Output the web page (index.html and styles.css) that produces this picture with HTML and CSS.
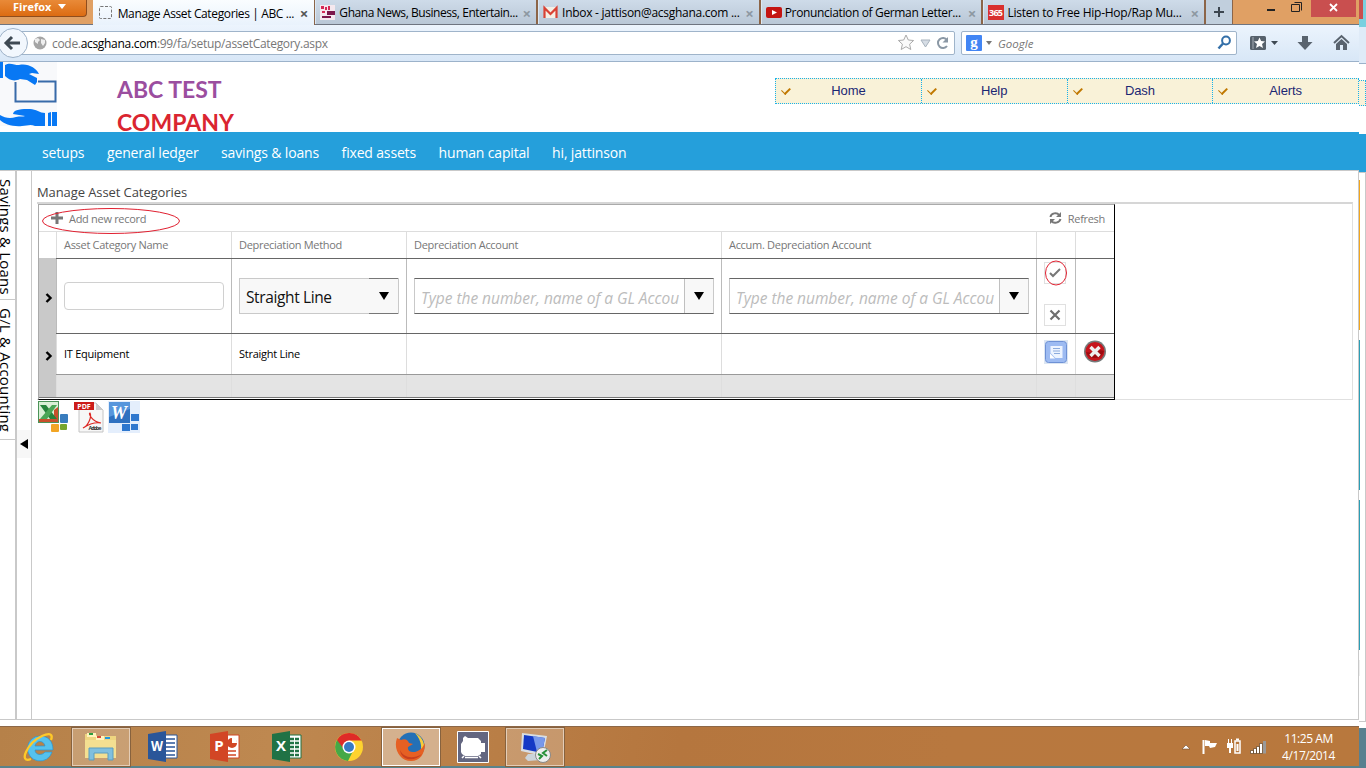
FILE: index.html
```html
<!DOCTYPE html>
<html lang="en">
<head>
<meta charset="utf-8">
<title>Manage Asset Categories | ABC Test Company</title>
<link rel="stylesheet" href="styles.css">
</head>
<body>
<div class="screen">
<div class="main">
  <header class="tabs">
    <div class="firefox"><b>Firefox</b><i class="caret white"></i></div>
    <div class="tab active"><svg width="16" height="16"><rect x="1.5" y="1.5" width="12" height="12" rx="1" fill="none" stroke="#777" stroke-dasharray="3 1.5"/></svg><span class="t1">Manage Asset Categories | ABC ...</span><em>×</em></div>
    <div class="tab"><svg width="16" height="16"><path fill="#f5e8ee" d="M0 0h15v15H0z"/><path fill="#d52a55" d="M1 1h3v3H1zM5 2h2v3H5zM8 1h2v4H8zM2 6h3v2H2z"/><path fill="#7c174b" d="M7 6h8v4H7zM2 11h9v2H2z"/></svg><span class="t2">Ghana News, Business, Entertain...</span><em>×</em></div>
    <div class="tab"><svg width="16" height="16"><path fill="#f4efe5" d="M1 2h13v11H1z"/><path d="M1.500 13V3l6 6 6-6v10" fill="none" stroke="#d94235" stroke-width="2.200"/></svg><span class="t3">Inbox - jattison@acsghana.com ...</span><em>×</em></div>
    <div class="tab"><svg width="16" height="16"><rect y="2" width="16" height="11" rx="2" fill="#c41411"/><path d="M6 5l5 2.500L6 10z" fill="#fff"/></svg><span class="t4">Pronunciation of German Letter...</span><em>×</em></div>
    <div class="tab"><svg width="16" height="16"><path fill="#d9302f" d="M0 0h16v15H0z"/><text x="8" y="11" text-anchor="middle" textLength="14" font-size="9" font-weight="700" fill="#fff">365</text></svg><span class="t5">Listen to Free Hip-Hop/Rap Mu...</span><em>×</em></div>
    <div class="newtab"><svg width="12" height="12"><path d="M6 1v10M1 6h10" stroke="#3c4650" stroke-width="2"/></svg></div>
    <div class="controls"><svg width="126" height="25"><path d="M34 10h8" stroke="#222" stroke-width="2"/><path d="M61.500 2.500h7v8M58.500 4.500h8v7h-8z" fill="none" stroke="#222"/><path fill="#c94f4f" d="M78 0h45v17H78z"/><path d="M97 4l7 7m0-7l-7 7" stroke="#fff" stroke-width="1.800"/></svg></div>
  </header>
  <div class="toolbar">
    <svg class="back" width="32" height="34"><circle cx="13" cy="17" r="14.500" fill="#f2f7fd" stroke="#9eb2c8"/><path d="M12 11l-6 6 6 6M6 17h14" fill="none" stroke="#3e4953" stroke-width="3"/></svg>
    <div class="url"><svg width="14" height="14"><circle cx="7" cy="7" r="6.500" fill="#a5a5a5"/><path d="M2 3l3-1 2 2-2 2v2L2 6zM8 3l4 1v3l-2 3-2-3z" fill="#eee"/></svg><span class="address">code.<b>acsghana.com</b>:99/fa/setup/assetCategory.aspx</span>
      <svg width="52" height="20"><path d="M9 2l2.300 5 5.300.5-4 3.700 1.200 5.300L9 13.700l-4.800 2.800 1.200-5.300-4-3.700L6.700 7z" fill="#fafafa" stroke="#aaa"/><path d="M24 7h9l-4.500 7z" fill="#d6dde5" stroke="#a7b2bd"/><path d="M50 7A5 5 0 1 0 50 13" fill="none" stroke="#8b98a5" stroke-width="2"/><path d="M51 4v5.500h-5.500z" fill="#8b98a5"/></svg></div>
    <div class="search"><svg width="16" height="16"><rect width="16" height="16" rx="1" fill="#4285f4"/><text x="8" y="11.500" text-anchor="middle" font-family="Liberation Serif, serif" font-size="15" font-style="normal" font-weight="700" fill="#fff">g</text></svg><i class="caret small"></i><span>Google</span><svg width="15" height="16"><circle cx="9" cy="5.500" r="3.900" fill="none" stroke="#336fa8" stroke-width="2"/><path d="M6 8.500l-4.500 5" stroke="#336fa8" stroke-width="2.500"/></svg></div>
    <svg class="tools" width="110" height="30"><rect x="1" y="8" width="16" height="14" rx="1.500" fill="#56616c"/><path d="M4 9v12" stroke="#a4adb5"/><path d="M10.500 9.500l1.600 3.600 3.900.4-3 2.600 1 3.900-3.500-2-3.500 2 1-3.900-3-2.600 3.900-.4z" fill="#fff"/><path d="M22 13h7l-3.500 4z" fill="#3e4953"/><path d="M53 8h6v6h4.500L56 22l-7.500-8H53z" fill="#59636e"/><path d="M85 15l7.500-7 7.500 7" fill="none" stroke="#59636e" stroke-width="2"/><path d="M87 16l5.500-5 5.500 5v6h-4v-5h-3v5h-4z" fill="#59636e"/></svg>
  </div>
  <section class="banner">
    <svg class="logo" width="58" height="66"><path fill="#f8f9fb" d="M0 0h57v64H0z"/><path d="M0 0h3v16H0z" fill="#0878f4"/><path d="M5 3c5-3 9 0 14 0 9-2 17 3 20 9l-7-1-3 1 8 4 0 4-2 3-8-5-7-1c-6 3-11 1-15-3z" fill="#0878f4"/><path d="M15.500 20v19.500h40v-20H38" fill="none" stroke="#386ba9" stroke-width="2"/><path d="M0 53c5 3 10 4 16 2 4-1 7 0 9-1l-12-2c1-5 9-5 17-5 6 0 10 4 15 4v13H35c-5-2-8 0-13 0-9 1-18-2-22-6zM48 51l3-1v14h-3zM52 50h5v14h-5z" fill="#0878f4"/></svg>
    <h1><span class="abc">ABC TEST</span><span class="co">COMPANY</span></h1>
    <nav class="quick"><a>Home</a><a>Help</a><a>Dash</a><a>Alerts</a></nav>
  </section>
  <nav class="menu"><a>setups</a><a>general ledger</a><a>savings &amp; loans</a><a>fixed assets</a><a>human capital</a><a>hi, jattinson</a></nav>
  <div class="work">
    <aside><div class="v1"><span>Savings &amp; Loans</span></div><div class="v2"><span>G/L &amp; Accounting</span></div></aside>
    <div class="splitter"><div><svg width="9" height="10"><path d="M8 0v10L0 5z"/></svg></div></div>
    <main>
      <h2><span>Manage Asset Categories</span></h2>
      <div class="frame">
        <div class="grid">
          <div class="commands"><svg width="12" height="12"><path d="M6 0v12M0 6h12" stroke="#777" stroke-width="3"/></svg><span class="add">Add new record</span><svg width="13" height="12"><path d="M1.500 5C2 1 8 0 10 3M11.500 7c-1 4-7 5-9 2" fill="none" stroke="#777" stroke-width="2"/><path d="M12 0v5H7zM1 12V7h5z" fill="#777"/></svg><span class="refresh">Refresh</span>
            <svg class="mark" width="140" height="28"><ellipse cx="70" cy="14" rx="68.500" ry="12.500"/></svg></div>
          <div class="row head"><div></div><div><span>Asset Category Name</span></div><div><span>Depreciation Method</span></div><div><span>Depreciation Account</span></div><div><span>Accum. Depreciation Account</span></div><div></div><div></div></div>
          <div class="row edit"><div class="expand"><svg width="8" height="10"><path d="M1.500 1l4 4-4 4" fill="none" stroke="#000" stroke-width="2.400"/></svg></div>
            <div><div class="input"></div></div>
            <div><div class="select"><span>Straight Line</span><div><i class="caret big"></i></div></div></div>
            <div><div class="combo"><span>Type the number, name of a GL Accou</span><div><i class="caret big"></i></div></div></div>
            <div><div class="combo"><span>Type the number, name of a GL Accou</span><div><i class="caret big"></i></div></div></div>
            <div class="actions"><div><svg width="14" height="12"><path d="M2 6l3 3 7-7" fill="none" stroke="#777" stroke-width="2"/></svg><svg class="mark round" width="24" height="28"><ellipse cx="12" cy="14" rx="10.500" ry="12"/></svg></div><div><svg width="12" height="12"><path d="M1.500 1.500l9 9m0-9l-9 9" stroke="#6e6e6e" stroke-width="2.200"/></svg></div></div><div></div></div>
          <div class="row data"><div class="expand"><svg width="8" height="10"><path d="M1.500 1l4 4-4 4" fill="none" stroke="#000" stroke-width="2.400"/></svg></div><div><span>IT Equipment</span></div><div><span>Straight Line</span></div><div></div><div></div>
            <div class="icon"><svg width="24" height="24"><path fill="#dce6f3" d="M0 0h24v24H0z"/><rect x="1.500" y="1.500" width="21" height="21" rx="3" fill="#9dbbf2" stroke="#6e91d5"/><path d="M6.500 6h12v12h-7l-5-5z" fill="#edf4ff"/><path d="M9 8.500h7M9 11h7M10 13.500h6" stroke="#8cabdd"/><path d="M6 13.500l5 5H6z" fill="#fff"/></svg></div>
            <div class="icon"><svg width="24" height="24"><circle cx="12" cy="11.500" r="11" fill="#757a7a"/><circle cx="12" cy="11.500" r="9.500" fill="#c7141c"/><path d="M3 12a9.500 9.500 0 0 0 18-1c-6-3-10 3-18 1z" fill="#9c0b10"/><path d="M7.500 7l9 9m0-9l-9 9" stroke="#eee" stroke-width="3.400"/></svg></div></div>
          <div class="row foot"><div class="expand"></div><div></div><div></div><div></div><div></div><div></div><div></div></div>
        </div>
      </div>
      <div class="exports">
        <svg width="32" height="32"><rect x=".5" y=".5" width="20" height="21" fill="#d9efd5" stroke="#4b9358"/><path d="M1 18h19v3H1zM16 9l4-3v14h-4z" fill="#c8502c"/><path d="M2 4h6l11 14h-7z" fill="#26833b"/><path d="M14 4h5L9 18H2z" fill="#4aa555"/><rect x="22" y="13" width="8" height="9" rx="1" fill="#397cbd"/><rect x="13" y="23" width="8" height="8" rx="1" fill="#f2a524"/><rect x="22" y="23" width="7" height="6" rx="1" fill="#77a52d"/></svg>
        <svg class="pdf" width="30" height="32"><path d="M5 2h17l7 7v22H5z" fill="#f7f7f7" stroke="#c4c4c4"/><path d="M22 2v7h7z" fill="#ccc"/><path d="M0 1h20v8H0z" fill="#cc1d1a"/><text x="10" y="8" text-anchor="middle" font-size="7" font-weight="700" fill="#fff">PDF</text><path d="M9 27c5-2 9-11 7-15-2 0 2 9 11 10-6-1-12 1-18 5z" fill="none" stroke="#dc2824" stroke-width="1.200"/><text x="21" y="29" text-anchor="middle" textLength="13" font-size="5.500" font-weight="700" fill="#333">Adobe</text></svg>
        <svg width="32" height="32"><path fill="#e4eefc" d="M0 0h32v32H0z"/><path d="M1 1h21v21H1z" fill="#2f71c0"/><path d="M1 1h21v7L1 16z" fill="#5796dc"/><text x="11" y="18" text-anchor="middle" font-family="Liberation Serif, serif" font-size="18" font-style="italic" font-weight="700" fill="#fff">W</text><path d="M23 13h8v7h-8zM14 23h8v7h-8zM23 23h7v6h-7z" fill="#2e77ce"/></svg>
      </div>
    </main>
  </div>
  <footer class="taskbar">
    <div class="app"><svg width="34" height="32"><path fill-rule="evenodd" d="M18 5a12.500 12.500 0 1 0 12 16h-7c-3 4-10 3-10-2h18C31 10 26 5 18 5zM13 15c1-6 9-6 10 0z" fill="#55c2ee" stroke="#2c93cf" stroke-width=".7"/><path d="M9 28c-13 5-4-16 11-23 9-4 11-1 9 4" fill="none" stroke="#ffc928" stroke-width="2.300"/></svg></div>
    <div class="app open"><svg width="34" height="32"><path d="M1 3h11l1 2h19v22H1z" fill="#efd580"/><path d="M3 2h9v4H3zM12 5h8v4h-8z" fill="#fff3bd"/><path d="M5 2h4v2H5z" fill="#2a9d3e"/><path d="M13 5h4v2h-4z" fill="#d44c38"/><path d="M21 6h5v2h-5z" fill="#2196dc"/><path d="M1 9h31v18H1z" fill="#f4df91"/><path d="M5 17h24v12h-5v-7H10v7H5z" fill="#80bfde" stroke="#5c9dbe"/></svg></div>
    <div class="app"><svg width="32" height="32"><path fill="#fff" stroke="#2a5699" d="M17 4h13v23H17z"/><path d="M18 8h10M18 12h10M18 16h10M18 20h10M18 24h10" stroke="#2a5699" stroke-width="1.500"/><path fill="#2a5699" d="M1 3l18-3v31L1 28z"/><text x="10" y="20" text-anchor="middle" textLength="12" lengthAdjust="spacingAndGlyphs" font-size="14" font-weight="700" fill="#fff">W</text></svg></div>
    <div class="app"><svg width="32" height="32"><path fill="#fff" stroke="#d24625" d="M17 4h13v23H17z"/><circle cx="23" cy="12" r="5" fill="#d24625"/><path d="M23 12V6a6 6 0 0 1 5 6z" fill="#fff"/><path d="M19 20h8M19 24h8" stroke="#d24625" stroke-width="1.500"/><path fill="#d24625" d="M1 3l18-3v31L1 28z"/><text x="10" y="20" text-anchor="middle" font-size="15" font-weight="700" fill="#fff">P</text></svg></div>
    <div class="app"><svg width="32" height="32"><path fill="#fff" stroke="#207245" d="M17 4h13v23H17z"/><path d="M19 8h9M19 12h9M19 16h9M19 20h9M19 24h9" stroke="#207245" stroke-width="2.500" stroke-dasharray="4 1"/><path fill="#207245" d="M1 3l18-3v31L1 28z"/><text x="10" y="20" text-anchor="middle" font-size="15" font-weight="700" fill="#fff">X</text></svg></div>
    <div class="app"><svg width="32" height="32"><circle cx="16" cy="16" r="14" fill="#fed32f"/><path d="M16 16L4 9a14 14 0 0 0 11 21l6-12z" fill="#45a847"/><path d="M16 9.500h12.500A14 14 0 0 0 4 9l6 8z" fill="#df2b27"/><circle cx="16" cy="16" r="6.500" fill="#fff"/><circle cx="16" cy="16" r="5" fill="#387ac4"/></svg></div>
    <div class="app open current"><svg width="32" height="32"><circle cx="16" cy="15" r="13.500" fill="#2470b6"/><path d="M20 2c12 6 12 21 1 26 8-8 6-18-1-26z" fill="#f8cc39"/><path d="M2 7l4 2c4-2 7 0 8 3l4 1-5 3c-1 5 6 8 14 1l3-5c0 11-5 18-14 18C5 30-2 18 2 7z" fill="#e66023"/><path d="M5 19c3 7 12 10 22 4-8 9-21 6-22-4z" fill="#c9401e"/></svg></div>
    <div class="app"><svg width="32" height="32"><path d="M.5.500h31v31H.5z" fill="#636680" stroke="#fff"/><path d="M6 7l2-2 3 2h10l3 3v2h4v9h-4v2l-3 2H8l-3-2-1-2v-8l2-3z" fill="#fff"/><path d="M7 25l-2 2M22 25l2 2M8 26.500h13" stroke="#fff" stroke-width="1.500"/></svg></div>
    <div class="app open"><svg width="32" height="32"><path d="M3 2l25 3-4 20L2 20z" fill="#d9dee3"/><path d="M5 4l21 3-3 15-19-4z" fill="#1438c5"/><path d="M14 5l12 2-3 15-5-1z" fill="#7898ea"/><path d="M9 23h9v3l4 3-13 1-3-3z" fill="#ccd4da"/><circle cx="24" cy="24" r="7.500" fill="#eee" stroke="#888"/><path d="M19 23l4 2-3 3M28 19l-4 3 4 3" fill="none" stroke="#289139" stroke-width="2"/></svg></div>
    <svg class="tray" width="90" height="24"><path d="M2 14h8l-4-4z" fill="#fff" stroke="#6e4b2e" stroke-width=".6"/><path d="M23.500 5v14" stroke="#fff" stroke-width="2"/><path d="M25 5l5 1v2l7 0-2 4-5 1-1-2h-4z" fill="#fff"/><path d="M55 6h5v12h-5z" fill="none" stroke="#fff" stroke-width="1.500"/><path d="M56.500 9h2v7h-2zM56 3.500h3v2h-3zM47 8h6v5h-6zM49 12h2v6h-2zM48 4h1v4h-1zM51 4h1v4h-1z" fill="#fff"/><path d="M70.500 15.500h3v3h-3zM73.500 13.500h3v5h-3zM76.500 11.500h3v7h-3zM79.500 8.500h3v10h-3z" fill="#fff" stroke="#604020" stroke-width=".7"/><path d="M83 6h3v12.500h-3z" fill="#999"/></svg>
    <div class="clock"><span>11:25 AM</span><span>4/17/2014</span></div>
  </footer>
</div>
<div class="edge"><div class="e-title"></div><div class="e-tool"></div><div class="e-banner"><div></div></div><div class="e-menu"></div><div class="e-work"><i></i><b></b><b></b><s></s></div><div class="e-gap"></div><div class="e-desk"></div></div>
</div>
</body>
</html>
```
FILE: styles.css
```css
*{box-sizing:border-box}
body{margin:0;font-family:"Open Sans","Noto Sans",sans-serif;font-size:11px;color:#000;background:#fff}
svg{display:block;flex:none}
span{white-space:nowrap}
.screen{display:flex;width:1366px;height:768px;overflow:hidden;background:#fff}
.main{width:1359px;height:768px;display:flex;flex-direction:column;flex:none}
.tabs{height:25px;display:flex;background:#e0a064;border-bottom:1px solid #6e7480;flex:none}
.firefox{width:87px;height:17px;margin-right:6px;background:linear-gradient(#e98a38,#dc6c12);border:1px solid #8f4d1d;border-top:0;border-left:0;border-radius:0 0 4px 0;color:#fff;display:flex;align-items:flex-start;padding-left:13px;gap:7px;font-size:11px;line-height:13px}
.firefox .caret{margin-top:4px}
.caret{display:block;width:0;height:0;border:4px solid transparent;border-bottom:0;border-top:5px solid #000;flex:none}
.caret.white{border-top-color:#fff}
.caret.small{border-width:4px 3px 0;border-top-color:#777}
.caret.big{border-width:8px 5px 0}
.tab{width:222.700px;height:24px;padding:1px 5px 0 4px;display:flex;align-items:center;background:linear-gradient(#cedbe9,#b9c7d6);border-right:2px solid #8c6548;border-left:1px solid #dce8f4;flex:none;font-size:12px;gap:3px}
.tab.active{height:25px;background:linear-gradient(#fafdff,#e9f2fc);border-left:0;border-right-width:1px;padding-right:6px;padding-left:5px;gap:4px}
.tab em{font-style:normal;margin-left:auto;color:#8d98a2;font-size:15px;font-weight:700;line-height:20px}
.tab.active em{color:#555}
.t1{letter-spacing:-.37px}
.t2{letter-spacing:-.44px}
.t3{letter-spacing:-.27px}
.t4{letter-spacing:-.35px}
.t5{letter-spacing:-.24px}
.newtab{width:27px;background:#c1cfdd;border-right:1px solid #8c6548;display:grid;place-items:center}
.toolbar{height:37px;background:linear-gradient(#ecf4fd,#d8e7f7);border-bottom:1px solid #9cb2ca;display:flex;align-items:center;flex:none}
.back{margin-right:-12px;position:relative}
.url{width:935px;height:24px;background:#fff;border:1px solid #9fb4ca;border-radius:2px;display:flex;align-items:center;padding-left:12px;padding-right:5px}
.address{font-size:12px;color:#777;margin-left:5px;margin-right:auto;letter-spacing:-.31px}
.address b{font-weight:400;color:#000}
.search{width:276px;height:24px;margin-left:6px;background:#fff;border:1px solid #9fb4ca;border-radius:2px;display:flex;align-items:center;padding:0 4px;font-size:11.500px;font-style:italic;color:#777}
.search .caret{margin:0 6px 0 4px}
.search span{margin-right:auto}
.tools{margin-left:12px}
.banner{height:70px;display:flex;flex:none}
.banner h1{margin:11px 0 0 59px;width:599px;font:700 23px/33px Lato,sans-serif;display:flex;flex-direction:column;align-items:flex-start}
.abc{color:#9b4e9f}
.co{color:#da2530}
.quick{display:flex;margin-top:16px;width:584px;height:26px;border:1px dotted #18b2ea;background:#f9f2d8;margin-left:59px}
.quick a{flex:1;text-align:center;font:13px/24px "Liberation Sans",sans-serif;letter-spacing:-.1px;color:#1b2773;border-left:1px dotted #18b2ea;position:relative}
.quick a:first-child{border-left:0}
.quick a:before{content:"";position:absolute;left:6px;top:8px;width:7px;height:4px;border-left:1.500px solid #c07800;border-bottom:2px solid #c07800;transform:rotate(-45deg)}
.menu{height:38px;background:#259fdb;color:#fff;display:flex;align-items:center;gap:22.600px;padding:2px 0 0 42px;font-size:14px;letter-spacing:-.16px;flex:none}
.work{height:550px;border-top:1px solid #c9c9c9;border-right:1px solid #c9c9c9;border-bottom:1px solid #c9c9c9;display:flex;flex:none}
aside{width:17px;border-right:2px solid #c9c9c9;font-size:15px;letter-spacing:.22px;flex:none}
aside>div{writing-mode:vertical-rl;border-bottom:1px solid #c9c9c9;line-height:16px;width:15px;display:flex;flex-direction:column-reverse;align-items:flex-start}
.v1{height:129px;padding-top:8px}
.v2{height:140px;padding-top:8px}
aside span{margin-left:-2px}
.splitter{width:15px;border-right:1px solid #c9c9c9;padding-top:259px;flex:none}
.splitter div{height:28px;background:#f7f7f7;display:grid;place-items:center}
main{padding:13px 6px 0 5px;flex:1}
h2{margin:0;font-size:13px;font-weight:400;line-height:17px;height:19px;color:#444;letter-spacing:-.09px}
.frame{border:1px solid #e0e0e0;border-top:2px solid #d6d6d6;border-left:0;height:198px;width:1316px;margin-top:-1px;padding-left:1px}
.grid{width:1077px;height:196px;border:1px solid #000;border-top-color:#aaa;border-left-color:#aaa;color:#777}
.commands{height:26px;display:flex;align-items:center;padding:0 9px 0 12px;position:relative;letter-spacing:-.3px}
.add{margin-left:6px;margin-right:auto}
.refresh{margin-left:6px}
.mark{position:absolute;left:2px;top:2px;fill:none;stroke:#e02030;stroke-width:1}
.mark.round{left:-1.500px;top:-4px}
.row{display:grid;grid-template-columns:17px 175px 175px 315px 315px 39px 39px;border-top:1px solid #ddd}
.row>div{border-left:1px solid #ddd;padding-left:7px;display:flex;align-items:center;min-width:0}
.row>div:first-child{border-left:0;padding-left:6px}
.head{height:27px;letter-spacing:-.3px}
.head span,.data span{padding-bottom:2px}
.edit{height:75px;border-color:#666}
.edit>div{border-color:#bbb}
.data{height:41px;border-color:#666;color:#000;letter-spacing:-.25px}
.foot{height:24px;border-top-color:#999;border-bottom:1px solid #777;background:#e4e4e4}
.foot>div{border-color:#dedede}
.row .expand{background:#c9c9c9;margin-top:-1px;padding-top:5px}
.input{width:160px;height:28px;border:1px solid #d0d0d0;border-radius:4px}
.select,.combo{height:36px;display:flex;align-items:center;background:#f8f8f8;border:1px solid #c9c9c9}
.select{width:160px;color:#111;font-size:15.500px;letter-spacing:-.38px}
.select span{margin-left:6px;margin-right:auto;padding-top:2px}
.select div{width:29px;height:36px;margin:-1px 0;border-top:1px solid #777;border-bottom:1px solid #777;display:grid;place-items:center}
.combo{width:300px;border-top-color:#666;border-bottom-color:#666;background:#fff;font-size:15.500px;font-style:italic;color:#bcbcbc;letter-spacing:-.03px}
.combo span{margin-left:6px;width:264px;padding-top:3px}
.combo div{width:29px;height:34px;background:#f8f8f8;border-left:1px solid #c0c0c0;display:grid;place-items:center}
.row>.actions{flex-direction:column;align-items:flex-start;gap:20px;padding-top:3px;justify-content:flex-start}
.actions div{width:22px;height:22px;border:1px solid #e0e0e0;display:grid;place-items:center;position:relative}
.row>.icon{padding-bottom:5px}
.exports{display:flex;gap:4px;padding:1px 0 0 1px}
.taskbar{height:42px;margin-top:6px;background:linear-gradient(100deg,#b68149,#be8850 20%,#b5763e 50%,#b8783f 70%,#b8783d);border-top:1px solid #8c6747;border-bottom:2px solid #58838c;display:flex;align-items:center;padding-left:10px;gap:4px;flex:none}
.app{width:58px;height:38px;display:grid;place-items:center}
.open{background:#ffffff38;border:1px solid #e4cdb7;outline:1px solid #87623e}
.open.current{background:#ffffff60;border:1px solid #fff}
.tray{margin-left:auto}
.clock{width:85px;color:#fff;display:flex;flex-direction:column;align-items:center;font-size:12px;letter-spacing:-.45px;line-height:17px;padding-right:16px}
.edge{width:7px;display:flex;flex-direction:column;flex:none}
.edge>*{flex:none}
.e-title{height:27px;background:linear-gradient(90deg,#c94f4f 0 4px,#7bd0df 4px) 0 0/7px 19px no-repeat #7bd0df}
.e-tool{height:37px;background:#dfebf8;border-bottom:1px solid #9cb2ca}
.e-banner{height:70px;padding-top:16px}
.e-banner div{height:26px;border:1px dotted #18b2ea;border-left:0;background:#f9f2d8}
.e-menu{height:38px;background:#259fdb}
.e-work{height:550px;border:1px solid #c9c9c9;border-left:0;padding-top:7px}
.e-work>*{display:block;width:1px;height:150px;margin-bottom:10px;background:#2b9db5}
.e-work i{background:#f3a61c}
.e-work s{height:16px;background:#eee}
.e-gap{height:6px}
.e-desk{height:40px;background:#58808f}
```
